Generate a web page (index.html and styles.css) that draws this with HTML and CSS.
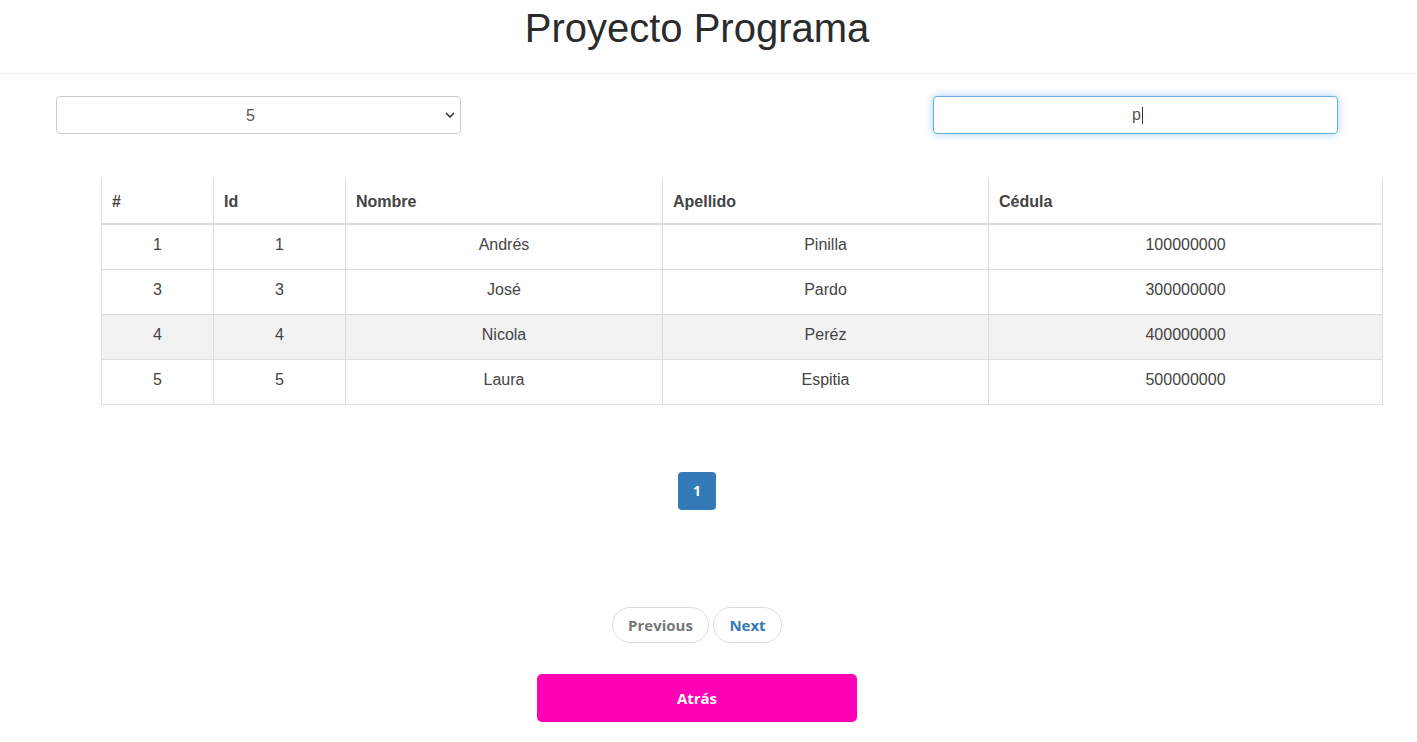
FILE: index.html
```html
<!DOCTYPE html>
<html lang="es">
<head>
<meta charset="utf-8">
<title>Proyecto Programa</title>
<link rel="stylesheet" href="styles.css">
</head>
<body>
<header class="header">
  <h1 class="title">Proyecto Programa</h1>
</header>
<main class="main">
  <div class="controls">
    <div class="select-wrap">
      <select class="form-control select">
        <option>5</option>
      </select>
      <svg class="chev" width="10" height="6" viewBox="0 0 10 6"><path d="M1 1l4 4 4-4" fill="none" stroke="#333" stroke-width="1.6"/></svg>
    </div>
    <div class="search-wrap">
      <div class="form-control search"><span>p</span><span class="caret"></span></div>
    </div>
  </div>
  <div class="table-wrap">
    <table class="table">
      <colgroup>
        <col class="c1"><col class="c2"><col class="c3"><col class="c4"><col class="c5">
      </colgroup>
      <thead>
        <tr><th>#</th><th>Id</th><th>Nombre</th><th>Apellido</th><th>Cédula</th></tr>
      </thead>
      <tbody>
        <tr><td>1</td><td>1</td><td>Andrés</td><td>Pinilla</td><td>100000000</td></tr>
        <tr><td>3</td><td>3</td><td>José</td><td>Pardo</td><td>300000000</td></tr>
        <tr class="hover"><td>4</td><td>4</td><td>Nicola</td><td>Peréz</td><td>400000000</td></tr>
        <tr><td>5</td><td>5</td><td>Laura</td><td>Espitia</td><td>500000000</td></tr>
      </tbody>
    </table>
  </div>
  <div class="pagination">
    <span class="page active">1</span>
  </div>
  <div class="pager">
    <button class="pill prev">Previous</button>
    <button class="pill next">Next</button>
  </div>
  <div class="back-row">
    <button class="back">Atrás</button>
  </div>
</main>
</body>
</html>
```
FILE: styles.css
```css
* { box-sizing: border-box; }
html, body { margin: 0; padding: 0; background: #fff; }
body {
  font-family: "Liberation Sans", Arial, sans-serif;
  font-size: 16px;
  color: #333;
}
.header {
  height: 74px;
  border-bottom: 1px solid #eee;
  display: flex;
  justify-content: center;
  padding-right: 23px;
}
.title {
  margin: 0;
  padding-top: 5px;
  font-weight: 400;
  font-size: 40px;
  line-height: 46px;
  color: #2b2b2b;
}
.controls {
  display: flex;
  justify-content: space-between;
  padding: 22px 79px 0 56px;
}
.select-wrap, .search-wrap { position: relative; width: 405px; }
.form-control {
  width: 100%;
  height: 38px;
  border: 1px solid #ccc;
  border-radius: 4px;
  background: #fff;
  font-family: "Liberation Sans", Arial, sans-serif;
  font-size: 16px;
  color: #555;
  text-align: center;
  text-align-last: center;
}
.select {
  appearance: none;
  -webkit-appearance: none;
  padding: 0 40px 0 24px;
}
.chev { position: absolute; right: 6px; top: 16px; pointer-events: none; }
.search {
  border-color: #66afe9;
  box-shadow: 0 0 8px rgba(102,175,233,.6);
  display: flex;
  align-items: center;
  justify-content: center;
  padding-left: 4px;
}
.caret { width: 1px; height: 17px; background: #333; margin-left: 1px; }
.table-wrap { padding: 44px 34px 0 101px; }
.table {
  width: 100%;
  border-collapse: collapse;
  table-layout: fixed;
  color: #444;
}
.c1 { width: 112px; } .c2 { width: 132px; } .c3 { width: 317px; } .c4 { width: 326px; }
.table th, .table td {
  border: 1px solid #ddd;
  height: 45px;
  padding: 0 10px 3px;
  vertical-align: middle;
}
.table th {
  border-top: none;
  border-bottom: 2px solid #ddd;
  text-align: left;
  font-weight: 700;
  height: 46px;
  padding-top: 2px;
  padding-bottom: 0;
}
.table td { text-align: center; }
.table tr.hover td { background: #f2f2f2; }
.pagination {
  display: flex;
  justify-content: center;
  padding-top: 67px;
  padding-right: 23px;
}
.page {
  width: 38px;
  height: 38px;
  border-radius: 4px;
  background: #337ab7;
  color: #fff;
  font-family: "Open Sans", sans-serif;
  font-weight: 700;
  font-size: 14px;
  display: flex;
  align-items: center;
  justify-content: center;
}
.pager {
  display: flex;
  justify-content: center;
  gap: 4px;
  padding-top: 97px;
  padding-right: 23px;
}
.pill {
  height: 36px;
  border: 1px solid #ddd;
  border-radius: 18px;
  background: #fff;
  font-family: "Open Sans", sans-serif;
  font-weight: 700;
  font-size: 15px;
  padding: 0;
  cursor: pointer;
}
.prev { color: #777; width: 97px; }
.next { color: #337ab7; width: 69px; }
.back-row {
  display: flex;
  justify-content: center;
  padding-top: 31px;
  padding-right: 23px;
}
.back {
  width: 320px;
  height: 48px;
  border: none;
  border-radius: 5px;
  background: #ff00b4;
  color: #fff;
  font-family: "Open Sans", sans-serif;
  font-weight: 700;
  font-size: 15px;
}
```
